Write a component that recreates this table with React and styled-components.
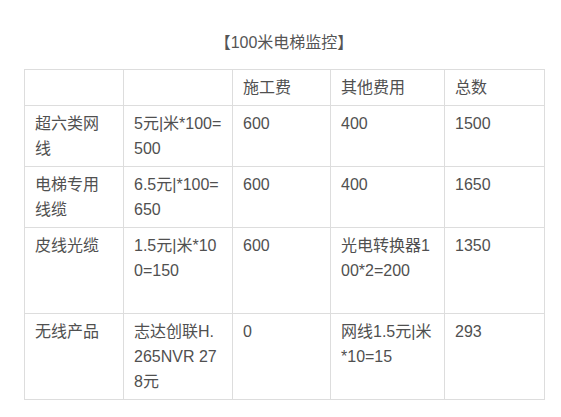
import styled, { createGlobalStyle } from "styled-components";

const GlobalStyle = createGlobalStyle`
  html,
  body {
    margin: 0;
    background: #fff;
  }

  body {
    font-family: "Liberation Sans", "Noto Sans CJK SC", sans-serif;
    font-size: 16px;
    color: #505050;
  }
`;

const Page = styled.div`
  display: flex;
  flex-direction: column;
  align-items: flex-start;
  padding: 30px 0 0 24px;
`;

const Section = styled.section`
  display: flex;
  flex-direction: column;
  gap: 14px;
  width: 520px;
`;

const Title = styled.h3`
  margin: 0;
  font-size: 16px;
  font-weight: 400;
  line-height: 25px;
  text-align: center;
  color: #555;
`;

const Table = styled.table`
  width: 520px;
  table-layout: fixed;
  border-collapse: collapse;
`;

const Col = styled.col`
  width: ${({ $w }) => $w}px;
`;

const Row = styled.tr`
  height: ${({ $h }) => ($h ? `${$h}px` : "auto")};
`;

const Cell = styled.td`
  padding: 5px 10px;
  border: 1px solid #ddd;
  vertical-align: top;
  line-height: 25px;
  word-break: break-all;
  text-align: left;
`;

const columns = [99, 109, 98, 114, 100];

const rows = [
  { cells: ["超六类网线", "5元|米*100=500", "600", "400", "1500"] },
  { cells: ["电梯专用线缆", "6.5元|*100=650", "600", "400", "1650"] },
  { cells: ["皮线光缆", "1.5元|米*100=150", "600", "光电转换器100*2=200", "1350"], height: 86 },
  { cells: ["无线产品", "志达创联H.265NVR 278元", "0", "网线1.5元|米*10=15", "293"] },
];

const App = () => {
  return (
    <>
      <GlobalStyle />
      <Page>
        <Section>
          <Title>【100米电梯监控】</Title>
          <Table>
            <colgroup>
              {columns.map((w, i) => (
                <Col key={i} $w={w} />
              ))}
            </colgroup>
            <tbody>
              <Row>
                <Cell />
                <Cell />
                <Cell>施工费</Cell>
                <Cell>其他费用</Cell>
                <Cell>总数</Cell>
              </Row>
              {rows.map((row, i) => (
                <Row key={i} $h={row.height}>
                  {row.cells.map((text, j) => (
                    <Cell key={j}>{text}</Cell>
                  ))}
                </Row>
              ))}
            </tbody>
          </Table>
        </Section>
      </Page>
    </>
  );
};

export default App;
